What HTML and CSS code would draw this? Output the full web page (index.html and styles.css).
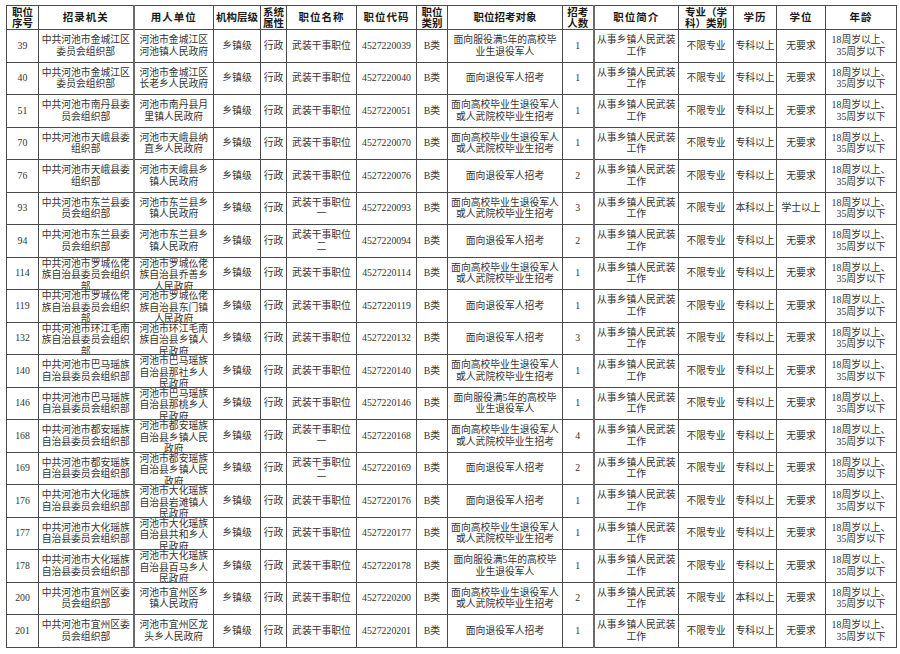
FILE: index.html
```html
<!DOCTYPE html>
<html lang="zh-CN">
<head>
<meta charset="utf-8">
<title>职位表</title>
<link rel="stylesheet" href="styles.css">
</head>
<body>
<table class="grid">
<colgroup>
<col class="w1"><col class="w2"><col class="w3"><col class="w4"><col class="w5"><col class="w6"><col class="w7"><col class="w8"><col class="w9"><col class="w10"><col class="w11"><col class="w12"><col class="w13"><col class="w14"><col class="w15">
</colgroup>
<thead>
<tr class="hr">
<th>职位<br>序号</th><th class="sp">招录机关</th><th class="sp">用人单位</th><th>机构层级</th><th>系统<br>属性</th><th class="sp">职位名称</th><th class="sp">职位代码</th><th>职位<br>类别</th><th>职位招考对象</th><th>招考<br>人数</th><th class="sp">职位简介</th><th>专业（学<br>科）类别</th><th class="sp">学历</th><th class="sp">学位</th><th class="sp">年龄</th>
</tr>
</thead>
<tbody>
<tr><td>39</td><td>中共河池市金城江区<br>委员会组织部</td><td>河池市金城江区<br>河池镇人民政府</td><td>乡镇级</td><td>行政</td><td>武装干事职位</td><td>4527220039</td><td>B类</td><td>面向服役满5年的高校毕<br>业生退役军人</td><td>1</td><td>从事乡镇人民武装<br>工作</td><td>不限专业</td><td>专科以上</td><td>无要求</td><td>18周岁以上、<br>35周岁以下</td></tr>
<tr><td>40</td><td>中共河池市金城江区<br>委员会组织部</td><td>河池市金城江区<br>长老乡人民政府</td><td>乡镇级</td><td>行政</td><td>武装干事职位</td><td>4527220040</td><td>B类</td><td>面向退役军人招考</td><td>1</td><td>从事乡镇人民武装<br>工作</td><td>不限专业</td><td>专科以上</td><td>无要求</td><td>18周岁以上、<br>35周岁以下</td></tr>
<tr><td>51</td><td>中共河池市南丹县委<br>员会组织部</td><td>河池市南丹县月<br>里镇人民政府</td><td>乡镇级</td><td>行政</td><td>武装干事职位</td><td>4527220051</td><td>B类</td><td>面向高校毕业生退役军人<br>或人武院校毕业生招考</td><td>1</td><td>从事乡镇人民武装<br>工作</td><td>不限专业</td><td>专科以上</td><td>无要求</td><td>18周岁以上、<br>35周岁以下</td></tr>
<tr><td>70</td><td>中共河池市天峨县委<br>组织部</td><td>河池市天峨县纳<br>直乡人民政府</td><td>乡镇级</td><td>行政</td><td>武装干事职位</td><td>4527220070</td><td>B类</td><td>面向高校毕业生退役军人<br>或人武院校毕业生招考</td><td>1</td><td>从事乡镇人民武装<br>工作</td><td>不限专业</td><td>专科以上</td><td>无要求</td><td>18周岁以上、<br>35周岁以下</td></tr>
<tr><td>76</td><td>中共河池市天峨县委<br>组织部</td><td>河池市天峨县乡<br>镇人民政府</td><td>乡镇级</td><td>行政</td><td>武装干事职位</td><td>4527220076</td><td>B类</td><td>面向退役军人招考</td><td>2</td><td>从事乡镇人民武装<br>工作</td><td>不限专业</td><td>专科以上</td><td>无要求</td><td>18周岁以上、<br>35周岁以下</td></tr>
<tr><td>93</td><td>中共河池市东兰县委<br>员会组织部</td><td>河池市东兰县乡<br>镇人民政府</td><td>乡镇级</td><td>行政</td><td>武装干事职位<br>一</td><td>4527220093</td><td>B类</td><td>面向高校毕业生退役军人<br>或人武院校毕业生招考</td><td>3</td><td>从事乡镇人民武装<br>工作</td><td>不限专业</td><td>本科以上</td><td>学士以上</td><td>18周岁以上、<br>35周岁以下</td></tr>
<tr><td>94</td><td>中共河池市东兰县委<br>员会组织部</td><td>河池市东兰县乡<br>镇人民政府</td><td>乡镇级</td><td>行政</td><td>武装干事职位<br>二</td><td>4527220094</td><td>B类</td><td>面向退役军人招考</td><td>2</td><td>从事乡镇人民武装<br>工作</td><td>不限专业</td><td>专科以上</td><td>无要求</td><td>18周岁以上、<br>35周岁以下</td></tr>
<tr><td>114</td><td><div class="clip">中共河池市罗城仫佬<br>族自治县委员会组织<br>部</div></td><td><div class="clip">河池市罗城仫佬<br>族自治县乔善乡<br>人民政府</div></td><td>乡镇级</td><td>行政</td><td>武装干事职位</td><td>4527220114</td><td>B类</td><td>面向高校毕业生退役军人<br>或人武院校毕业生招考</td><td>1</td><td>从事乡镇人民武装<br>工作</td><td>不限专业</td><td>专科以上</td><td>无要求</td><td>18周岁以上、<br>35周岁以下</td></tr>
<tr><td>119</td><td><div class="clip">中共河池市罗城仫佬<br>族自治县委员会组织<br>部</div></td><td><div class="clip">河池市罗城仫佬<br>族自治县东门镇<br>人民政府</div></td><td>乡镇级</td><td>行政</td><td>武装干事职位</td><td>4527220119</td><td>B类</td><td>面向退役军人招考</td><td>1</td><td>从事乡镇人民武装<br>工作</td><td>不限专业</td><td>专科以上</td><td>无要求</td><td>18周岁以上、<br>35周岁以下</td></tr>
<tr><td>132</td><td><div class="clip">中共河池市环江毛南<br>族自治县委员会组织<br>部</div></td><td><div class="clip">河池市环江毛南<br>族自治县乡镇人<br>民政府</div></td><td>乡镇级</td><td>行政</td><td>武装干事职位</td><td>4527220132</td><td>B类</td><td>面向退役军人招考</td><td>3</td><td>从事乡镇人民武装<br>工作</td><td>不限专业</td><td>专科以上</td><td>无要求</td><td>18周岁以上、<br>35周岁以下</td></tr>
<tr><td>140</td><td>中共河池市巴马瑶族<br>自治县委员会组织部</td><td><div class="clip">河池市巴马瑶族<br>自治县那社乡人<br>民政府</div></td><td>乡镇级</td><td>行政</td><td>武装干事职位</td><td>4527220140</td><td>B类</td><td>面向高校毕业生退役军人<br>或人武院校毕业生招考</td><td>1</td><td>从事乡镇人民武装<br>工作</td><td>不限专业</td><td>专科以上</td><td>无要求</td><td>18周岁以上、<br>35周岁以下</td></tr>
<tr><td>146</td><td>中共河池市巴马瑶族<br>自治县委员会组织部</td><td><div class="clip">河池市巴马瑶族<br>自治县那桃乡人<br>民政府</div></td><td>乡镇级</td><td>行政</td><td>武装干事职位</td><td>4527220146</td><td>B类</td><td>面向服役满5年的高校毕<br>业生退役军人</td><td>1</td><td>从事乡镇人民武装<br>工作</td><td>不限专业</td><td>专科以上</td><td>无要求</td><td>18周岁以上、<br>35周岁以下</td></tr>
<tr><td>168</td><td>中共河池市都安瑶族<br>自治县委员会组织部</td><td><div class="clip">河池市都安瑶族<br>自治县乡镇人民<br>政府</div></td><td>乡镇级</td><td>行政</td><td>武装干事职位<br>一</td><td>4527220168</td><td>B类</td><td>面向高校毕业生退役军人<br>或人武院校毕业生招考</td><td>4</td><td>从事乡镇人民武装<br>工作</td><td>不限专业</td><td>专科以上</td><td>无要求</td><td>18周岁以上、<br>35周岁以下</td></tr>
<tr><td>169</td><td>中共河池市都安瑶族<br>自治县委员会组织部</td><td><div class="clip">河池市都安瑶族<br>自治县乡镇人民<br>政府</div></td><td>乡镇级</td><td>行政</td><td>武装干事职位<br>二</td><td>4527220169</td><td>B类</td><td>面向退役军人招考</td><td>2</td><td>从事乡镇人民武装<br>工作</td><td>不限专业</td><td>专科以上</td><td>无要求</td><td>18周岁以上、<br>35周岁以下</td></tr>
<tr><td>176</td><td>中共河池市大化瑶族<br>自治县委员会组织部</td><td><div class="clip">河池市大化瑶族<br>自治县岩滩镇人<br>民政府</div></td><td>乡镇级</td><td>行政</td><td>武装干事职位</td><td>4527220176</td><td>B类</td><td>面向退役军人招考</td><td>1</td><td>从事乡镇人民武装<br>工作</td><td>不限专业</td><td>专科以上</td><td>无要求</td><td>18周岁以上、<br>35周岁以下</td></tr>
<tr><td>177</td><td>中共河池市大化瑶族<br>自治县委员会组织部</td><td><div class="clip">河池市大化瑶族<br>自治县共和乡人<br>民政府</div></td><td>乡镇级</td><td>行政</td><td>武装干事职位</td><td>4527220177</td><td>B类</td><td>面向高校毕业生退役军人<br>或人武院校毕业生招考</td><td>1</td><td>从事乡镇人民武装<br>工作</td><td>不限专业</td><td>专科以上</td><td>无要求</td><td>18周岁以上、<br>35周岁以下</td></tr>
<tr><td>178</td><td>中共河池市大化瑶族<br>自治县委员会组织部</td><td><div class="clip">河池市大化瑶族<br>自治县百马乡人<br>民政府</div></td><td>乡镇级</td><td>行政</td><td>武装干事职位</td><td>4527220178</td><td>B类</td><td>面向服役满5年的高校毕<br>业生退役军人</td><td>1</td><td>从事乡镇人民武装<br>工作</td><td>不限专业</td><td>专科以上</td><td>无要求</td><td>18周岁以上、<br>35周岁以下</td></tr>
<tr><td>200</td><td>中共河池市宜州区委<br>员会组织部</td><td>河池市宜州区乡<br>镇人民政府</td><td>乡镇级</td><td>行政</td><td>武装干事职位</td><td>4527220200</td><td>B类</td><td>面向高校毕业生退役军人<br>或人武院校毕业生招考</td><td>2</td><td>从事乡镇人民武装<br>工作</td><td>不限专业</td><td>本科以上</td><td>无要求</td><td>18周岁以上、<br>35周岁以下</td></tr>
<tr><td>201</td><td>中共河池市宜州区委<br>员会组织部</td><td>河池市宜州区龙<br>头乡人民政府</td><td>乡镇级</td><td>行政</td><td>武装干事职位</td><td>4527220201</td><td>B类</td><td>面向退役军人招考</td><td>1</td><td>从事乡镇人民武装<br>工作</td><td>不限专业</td><td>专科以上</td><td>无要求</td><td>18周岁以上、<br>35周岁以下</td></tr>
</tbody>
</table>
</body>
</html>
```
FILE: styles.css
```css
html, body {
  background: #ffffff;
}
body {
  margin: 5px 0 0 6px;
  font-family: "Liberation Serif", "Noto Sans CJK SC", serif;
  color: #333333;
}
.grid {
  border-collapse: collapse;
  table-layout: fixed;
  width: 890px;
}
.w1 { width: 32px; }
.w2 { width: 95px; }
.w3 { width: 80px; }
.w4 { width: 47px; }
.w5 { width: 26px; }
.w6 { width: 70px; }
.w7 { width: 60px; }
.w8 { width: 31px; }
.w9 { width: 115px; }
.w10 { width: 31px; }
.w11 { width: 85px; }
.w12 { width: 55px; }
.w13 { width: 43px; }
.w14 { width: 49px; }
.w15 { width: 71px; }
.grid th, .grid td {
  border: 1px solid #4a4a4a;
  padding: 0;
  text-align: center;
  vertical-align: middle;
  white-space: nowrap;
  overflow: hidden;
}
.grid th {
  height: 23px;
  font-size: 10.5px;
  line-height: 11px;
  font-weight: 700;
  color: #1a1a1a;
}
.grid th.sp {
  letter-spacing: 1px;
}
.grid td {
  height: 31.5px;
  font-size: 9.8px;
  line-height: 11.7px;
}
.grid th:nth-child(3), .grid td:nth-child(3),
.grid th:nth-child(11), .grid td:nth-child(11) {
  border-left: 2px solid #6a6a6a;
}
.clip {
  max-height: 31.5px;
  overflow: hidden;
}
```
